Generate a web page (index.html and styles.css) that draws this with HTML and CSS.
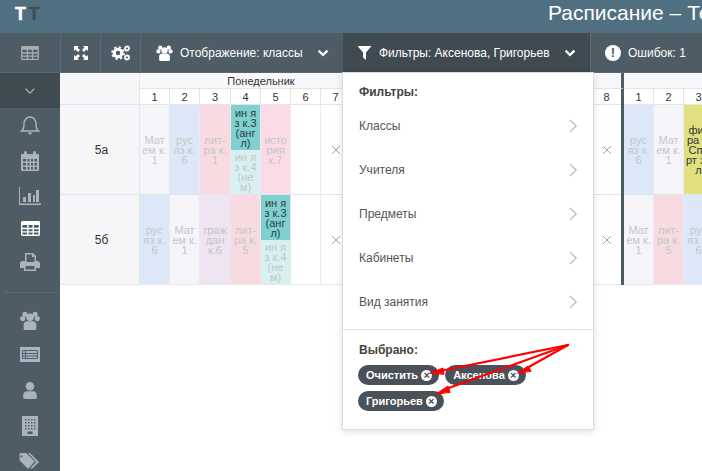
FILE: index.html
```html
<!DOCTYPE html>
<html lang="ru">
<head>
<meta charset="utf-8">
<title>Расписание</title>
<link rel="stylesheet" href="styles.css">
</head>
<body>
<svg class="defs" width="0" height="0">
  <defs>
    <symbol id="i-table" viewBox="0 0 28 22"><path fill="currentColor" fill-rule="evenodd" d="M2 0h24a2 2 0 0 1 2 2v18a2 2 0 0 1-2 2H2a2 2 0 0 1-2-2V2a2 2 0 0 1 2-2zM2 6v4h7V6zm9 0v4h6V6zm8 0v4h7V6zM2 12v3h7v-3zm9 0v3h6v-3zm8 0v3h7v-3zM2 17v3h7v-3zm9 0v3h6v-3zm8 0v3h7v-3z"/></symbol>
    <symbol id="i-group" viewBox="0 0 32 30"><g fill="currentColor"><circle cx="8" cy="5" r="4"/><circle cx="24" cy="5" r="4"/><circle cx="4.500" cy="12" r="4"/><circle cx="27.500" cy="12" r="4"/><circle cx="16" cy="10" r="6"/><path d="M6 28v-7c0-3 3-5 5-5h10c2 0 5 2 5 5v7a2 2 0 0 1-2 2H8a2 2 0 0 1-2-2z"/></g></symbol>
    <symbol id="i-chev" viewBox="0 0 14 10"><path fill="none" stroke="currentColor" stroke-width="2.800" d="M1.500 2l5.500 5.500L12.500 2"/></symbol>
    <symbol id="i-x" viewBox="0 0 10 10"><path fill="none" stroke="currentColor" stroke-width="0.900" d="M1 1l8 8M9 1l-8 8"/></symbol>
    <symbol id="i-arrow" viewBox="0 0 8 14"><path fill="none" stroke="currentColor" stroke-width="1.600" d="M1 1l6 6-6 6"/></symbol>
  </defs>
</svg>

<header class="topbar">
  <div class="logo"><span class="logo-a">T</span><span class="logo-b">T</span></div>
  <h1 class="title">Расписание – Текущее</h1>
</header>

<div class="main">
  <nav class="sidebar">
    <div class="side-top"><svg class="ic-table"><use href="#i-table"/></svg></div>
    <div class="side-toggle"><svg class="ic-toggle" viewBox="0 0 14 8"><path fill="none" stroke="currentColor" stroke-width="1.600" d="M2 1.500l5 5 5-5"/></svg></div>
    <div class="side-group">
      <svg class="side-ic" viewBox="0 0 20 20"><path fill="none" stroke="currentColor" stroke-width="1.500" d="M1.500 16c2.500-2 2.500-4 2.500-7 0-4 2.500-7 6-7s6 3 6 7c0 3 0 5 2.500 7z"/><path fill="currentColor" d="M8 17.500h4a2 2 0 0 1-4 0z"/></svg>
      <svg class="side-ic" viewBox="0 0 20 20"><path fill="currentColor" fill-rule="evenodd" d="M2 3h2V1.500a1.500 1.500 0 0 1 3 0V3h6V1.500a1.500 1.500 0 0 1 3 0V3h2a1 1 0 0 1 1 1v15a1 1 0 0 1-1 1H2a1 1 0 0 1-1-1V4a1 1 0 0 1 1-1zM3 8v2.500h3V8zm4.500 0v2.500h2V8zm3.500 0v2.500h2V8zm3.500 0v2.500h2.500V8zM3 12v2.500h3V12zm4.500 0v2.500h2V12zm3.500 0v2.500h2V12zm3.500 0v2.500h2.500V12zM3 16v2.500h3V16zm4.500 0v2.500h2V16zm3.500 0v2.500h2V16zm3.500 0v2.500h2.500V16z"/></svg>
      <svg class="side-ic side-ic-wide" viewBox="0 0 22 18"><path fill="currentColor" d="M0 0h1v16.500h21V18H0zM4 10h3v5H4zm5-4h3v9H9zm5 2h2v7h-2zm3-5h3v12h-3z"/></svg>
      <svg class="side-ic side-active" viewBox="0 0 28 22"><use href="#i-table"/></svg>
      <svg class="side-ic" viewBox="0 0 20 18"><path fill="currentColor" fill-rule="evenodd" d="M5 0h8l3 3v5h1a3 3 0 0 1 3 3v4h-4v3H4v-3H0v-4a3 3 0 0 1 3-3h2zm1.500 1.500V9h8V4H12V1.500zM5.500 13v3.500h9V13z"/></svg>
    </div>
    <div class="side-group side-group-b">
      <svg class="side-ic side-ic-group"><use href="#i-group"/></svg>
      <svg class="side-ic side-ic-list" viewBox="0 0 20 15"><path fill="currentColor" d="M0 0h20v15H0z"/><path fill="none" stroke="#4b6079" stroke-width="1" d="M2.500 3.500h15v8h-15zM2.500 6.500h15M2.500 9h15M5.500 3.500v8"/></svg>
      <svg class="side-ic side-ic-user" viewBox="0 0 16 20"><circle cx="8" cy="5" r="5" fill="currentColor"/><path fill="currentColor" d="M1.500 20a1.500 1.500 0 0 1-1.500-1.500V16c0-3 2-5 4-5h8c2 0 4 2 4 5v2.500a1.500 1.500 0 0 1-1.500 1.500z"/></svg>
      <svg class="side-ic side-ic-bld" viewBox="0 0 16 20"><path fill="currentColor" fill-rule="evenodd" d="M0 0h16v20H0zM3 3v1.500h1.500V3zm3 0v1.500h1.500V3zm3 0v1.500h1.500V3zm3 0v1.500h1.500V3zM3 6v1.500h1.500V6zm3 0v1.500h1.500V6zm3 0v1.500h1.500V6zm3 0v1.500h1.500V6zM3 9v1.500h1.500V9zm3 0v1.500h1.500V9zm3 0v1.500h1.500V9zm3 0v1.500h1.500V9zM3 12v1.500h1.500V12zm3 0v1.500h1.500V12zm3 0v1.500h1.500V12zm3 0v1.500h1.500V12zM5.500 15.500V18h5v-2.500z"/></svg>
      <svg class="side-ic side-ic-tags" viewBox="0 0 22 18"><path fill="currentColor" fill-rule="evenodd" d="M0 1a1 1 0 0 1 1-1h6l9 9-7 8-9-9zm3 2.500a1 1 0 1 0 0 .1zM9 0h2l9.500 9.500L13 17l-1.500-1 6-6.500z"/></svg>
    </div>
  </nav>

  <div class="content">
    <div class="toolbar">
      <button class="tool tool-icon" type="button"><svg class="t-ic" viewBox="0 0 14 14"><path fill="currentColor" d="M0 0h5L3.500 1.500 6 4 4 6 1.500 3.500 0 5zM14 0v5l-1.500-1.500L10 6 8 4l2.500-2.500L9 0zM0 14V9l1.500 1.500L4 8l2 2-2.500 2.500L5 14zM14 14H9l1.500-1.500L8 10l2-2 2.500 2.500L14 9z"/></svg></button>
      <button class="tool tool-icon" type="button"><svg class="t-ic t-ic-gears" viewBox="0 0 20 16"><g fill="none" stroke="currentColor"><circle cx="7" cy="8" r="3.800" stroke-width="3"/><circle cx="7" cy="8" r="6" stroke-width="1.600" stroke-dasharray="2.400 2.300"/><circle cx="16" cy="3.500" r="2" stroke-width="1.800"/><circle cx="16" cy="12.500" r="2" stroke-width="1.800"/></g></svg></button>
      <button class="tool tool-view" type="button">
        <svg class="t-group"><use href="#i-group"/></svg>
        <span class="t-label">Отображение: классы</span>
        <svg class="t-chev"><use href="#i-chev"/></svg>
      </button>
      <button class="tool tool-filter" type="button">
        <svg class="t-funnel" viewBox="0 0 14 14"><path fill="currentColor" d="M0 0h14L8.500 6.500V14l-3-2.500v-5z"/></svg>
        <span class="t-label">Фильтры: Аксенова, Григорьев</span>
        <svg class="t-chev"><use href="#i-chev"/></svg>
      </button>
      <button class="tool tool-err" type="button">
        <span class="err-dot">!</span>
        <span class="t-label">Ошибок: 1</span>
      </button>
    </div>

    <div class="grid">
      <div class="row row-days">
        <div class="c-name"></div>
        <div class="c-day">Понедельник</div>
        <div class="c-day"></div>
        <div class="c-day c-day-last"></div>
      </div>
      <div class="row row-nums">
        <div class="c-name"></div>
        <div class="day">
          <div class="n">1</div><div class="n">2</div><div class="n">3</div><div class="n">4</div><div class="n">5</div><div class="n">6</div><div class="n">7</div><div class="n">8</div>
        </div>
        <div class="day">
          <div class="n">1</div><div class="n">2</div><div class="n">3</div><div class="n">4</div><div class="n">5</div><div class="n">6</div><div class="n">7</div><div class="n">8</div>
        </div>
        <div class="day day-last">
          <div class="n">1</div><div class="n">2</div><div class="n">3</div>
        </div>
      </div>

      <div class="row row-class">
        <div class="c-name">5а</div>
        <div class="day">
          <div class="l gray">Мат<br>ем к.<br>1</div>
          <div class="l blue">рус<br>яз к.<br>6</div>
          <div class="l pink">лит-<br>ра к.<br>1</div>
          <div class="l split"><div class="hi">ин я<br>з к.3<br>(анг<br>л)</div><div class="lo">ин я<br>з к.4<br>(не<br>м)</div></div>
          <div class="l rose">исто<br>рия<br>к.7</div>
          <div class="l"></div>
          <div class="l x"><svg class="x-ic"><use href="#i-x"/></svg></div>
          <div class="l"></div>
        </div>
        <div class="day">
          <div class="l"></div><div class="l"></div><div class="l"></div><div class="l"></div><div class="l"></div><div class="l"></div><div class="l"></div>
          <div class="l x"><svg class="x-ic"><use href="#i-x"/></svg></div>
        </div>
        <div class="day day-last">
          <div class="l blue">рус<br>яз к.<br>6</div>
          <div class="l gray">Мат<br>ем к.<br>1</div>
          <div class="l yellow">физ<br>ра к.<br>Спо<br>рт за<br>л</div>
        </div>
      </div>

      <div class="row row-class">
        <div class="c-name">5б</div>
        <div class="day">
          <div class="l blue">рус<br>яз к.<br>6</div>
          <div class="l gray">Мат<br>ем к.<br>1</div>
          <div class="l lilac">граж<br>дан<br>к.6</div>
          <div class="l pink">лит-<br>ра к.<br>5</div>
          <div class="l split"><div class="hi">ин я<br>з к.3<br>(анг<br>л)</div><div class="lo">ин я<br>з к.4<br>(не<br>м)</div></div>
          <div class="l"></div>
          <div class="l x"><svg class="x-ic"><use href="#i-x"/></svg></div>
          <div class="l"></div>
        </div>
        <div class="day">
          <div class="l"></div><div class="l"></div><div class="l"></div><div class="l"></div><div class="l"></div><div class="l"></div><div class="l"></div>
          <div class="l x"><svg class="x-ic"><use href="#i-x"/></svg></div>
        </div>
        <div class="day day-last">
          <div class="l gray">Мат<br>ем к.<br>1</div>
          <div class="l pink">лит-<br>ра к.<br>5</div>
          <div class="l blue">рус<br>яз к.<br>6</div>
        </div>
      </div>
    </div>
  </div>
</div>

<aside class="dropdown">
  <div class="dd-top">
    <div class="dd-head">Фильтры:</div>
    <ul class="dd-list">
      <li class="dd-item">Классы<svg class="dd-arrow"><use href="#i-arrow"/></svg></li>
      <li class="dd-item">Учителя<svg class="dd-arrow"><use href="#i-arrow"/></svg></li>
      <li class="dd-item">Предметы<svg class="dd-arrow"><use href="#i-arrow"/></svg></li>
      <li class="dd-item">Кабинеты<svg class="dd-arrow"><use href="#i-arrow"/></svg></li>
      <li class="dd-item">Вид занятия<svg class="dd-arrow"><use href="#i-arrow"/></svg></li>
    </ul>
  </div>
  <div class="dd-bottom">
    <div class="dd-sel">Выбрано:</div>
    <div class="chips">
      <span class="chip">Очистить<span class="chip-x">×</span></span>
      <span class="chip">Аксенова<span class="chip-x">×</span></span>
      <span class="chip">Григорьев<span class="chip-x">×</span></span>
    </div>
  </div>
</aside>

<svg class="arrows" viewBox="0 0 702 471">
  <g fill="#f00" stroke="#f00" stroke-width="2.200" stroke-linecap="round">
    <line x1="568" y1="345" x2="440" y2="371"/>
    <line x1="568" y1="345" x2="527" y2="368"/>
    <line x1="568" y1="345" x2="446" y2="389"/>
    <path stroke-width="1" d="M430 373l13-5 1 6z"/>
    <path stroke-width="1" d="M518 373l10-7 3 5z"/>
    <path stroke-width="1" d="M436 394l12-8 2 6z"/>
  </g>
</svg>
</body>
</html>
```

FILE: styles.css
```css
* { box-sizing: border-box; }
html, body { margin: 0; padding: 0; height: 100%; overflow: hidden; }
body {
  position: relative;
  width: 702px;
  height: 471px;
  font-family: "Liberation Sans", Arial, sans-serif;
  background: #fff;
  color: #333;
}
.defs { position: absolute; }

.topbar {
  height: 33px;
  background: #507082;
  display: flex;
  align-items: flex-start;
  padding-left: 15px;
  white-space: nowrap;
  overflow: hidden;
}
.logo { width: 533px; flex: none; font-weight: 700; font-size: 17.500px; line-height: 28px; letter-spacing: 3px; -webkit-text-stroke: 0.500px; }
.logo-a { color: #fff; }
.logo-b { color: #3f4d55; }
.title { margin: 0; font-weight: 400; font-size: 21px; line-height: 26px; color: #fff; flex: none; }

.main { display: flex; height: 438px; }

.sidebar { width: 60px; flex: none; background: #4d5c65; color: #aab4ba; display: flex; flex-direction: column; }
.side-top { height: 40px; border-bottom: 1px solid #4f6c80; display: flex; align-items: center; justify-content: center; }
.ic-table { width: 18px; height: 14px; color: #a8adb0; }
.side-toggle { height: 35px; background: #3f4b51; display: flex; align-items: center; justify-content: center; color: #a6aeb3; }
.ic-toggle { width: 12px; height: 8px; }
.side-group { display: flex; flex-direction: column; align-items: center; padding: 7px 0 0; height: 185px; gap: 16px; border-bottom: 1px solid #5b6a73; margin: 0 3px; }
.side-group-b { border: 0; height: auto; padding-top: 18px; gap: 17px; }
.side-ic { width: 20px; height: 20px; flex: none; }
.side-ic-wide { width: 22px; height: 18px; }
.side-active { color: #fff; width: 19px; height: 15px; }
.side-ic-group { width: 22px; height: 19px; }
.side-ic-list { width: 20px; height: 15px; margin-bottom: 3px; }
.side-ic-user { width: 14px; height: 17px; }
.side-ic-bld { width: 16px; height: 20px; }
.side-ic-tags { width: 22px; height: 17px; }

.content { flex: 1; min-width: 0; overflow: hidden; }

.toolbar { height: 40px; display: flex; background: #4d5c65; border-bottom: 1px solid #4f6c80; }
.tool { border: 0; margin: 0; background: none; color: #fff; font: inherit; font-size: 12px; display: flex; align-items: center; border-left: 1px solid #4f6c80; padding: 0; flex: none; }
.tool-icon { width: 40px; justify-content: center; }
.t-ic { width: 14px; height: 14px; }
.t-ic-gears { width: 20px; height: 16px; }
.tool-view { width: 203px; padding-left: 15px; }
.t-group { width: 17px; height: 16px; margin-right: 7px; }
.t-label { white-space: nowrap; }
.t-chev { width: 12px; height: 8px; margin-left: auto; margin-right: 14px; }
.tool-filter { width: 247px; background: #3f4b51; padding-left: 14px; border: 0; }
.t-funnel { width: 15px; height: 14px; margin-right: 7px; }
.tool-err { padding-left: 14px; }
.err-dot { width: 16px; height: 16px; border-radius: 50%; background: #fff; color: #4d5c65; font-weight: 700; font-size: 13px; line-height: 16px; text-align: center; margin-right: 7px; }

.row { display: flex; white-space: nowrap; }
.c-name { width: 80px; flex: none; background: #f6f6f9; border-right: 1px solid #e4e4ea; font-size: 12px; color: #333; display: flex; align-items: center; justify-content: center; padding: 1px 0 0 4px; }
.row-days { height: 16px; }
.c-day { width: 242px; flex: none; background: #f8f8fa; text-align: center; font-size: 11px; line-height: 16px; color: #333; border-right: 3px solid #4d5c65; border-bottom: 1px solid #e4e4ea; padding-left: 3px; }
.c-day-last { border-right: 0; }
.row-nums { height: 16px; }
.row-nums .c-name { border-bottom: 1px solid #e4e4ea; }
.day { width: 242px; flex: none; display: flex; overflow: hidden; border-right: 3px solid #4d5c65; }
.day-last { border-right: 0; }
.n { width: 30px; flex: none; background: #fff; border-right: 1px solid #e4e4ea; border-bottom: 1px solid #e4e4ea; text-align: center; font-size: 11px; line-height: 16px; color: #333; }
.c-name + .day > :nth-child(3) { width: 31px; }
.row-class { height: 90px; }
.row-class .c-name { border-bottom: 1px solid #e4e4ea; }
.l { width: 30px; flex: none; border-right: 1px solid #e9e9ef; border-bottom: 1px solid #e4e4ea; font-size: 11px; line-height: 10px; color: #c4c6c8; text-align: center; display: flex; flex-direction: column; justify-content: center; white-space: nowrap; background: #fff; }
.gray { background: #f5f5f9; }
.blue { background: #dce8f8; }
.pink { background: #f8dbe0; }
.rose { background: #fbdce6; }
.lilac { background: #efe4f2; }
.yellow { background: #e0e080; color: #333; }
.x { align-items: center; color: #9a9a9a; }
.x-ic { width: 10px; height: 10px; }
.split { justify-content: flex-start; }
.hi { height: 45px; background: #80d0d0; color: #2c3a3f; display: flex; align-items: center; justify-content: center; }
.lo { flex: 1; background: #d8f0f0; display: flex; align-items: center; justify-content: center; }

.dropdown { position: absolute; left: 342px; top: 72px; width: 252px; height: 358px; background: #fff; border: 1px solid #ddd; box-shadow: 0 2px 8px rgba(0,0,0,.12); display: flex; flex-direction: column; font-size: 12px; }
.dd-top { height: 257px; border-bottom: 1px solid #e0e0e4; padding: 12px 16px 0; }
.dd-head { font-weight: 700; color: #444; line-height: 14px; margin-bottom: 5px; }
.dd-list { list-style: none; margin: 0; padding: 0; }
.dd-item { height: 44px; display: flex; align-items: center; justify-content: space-between; color: #555; }
.dd-arrow { width: 8px; height: 14px; color: #c5c8ca; }
.dd-bottom { padding: 13px 16px 0 15px; }
.dd-sel { font-weight: 700; color: #444; line-height: 14px; margin-bottom: 8px; padding-left: 1px; }
.chips { display: flex; flex-wrap: wrap; gap: 6px; }
.chip { height: 20px; border-radius: 10px; background: #4b5158; color: #fff; font-size: 11px; font-weight: 700; display: inline-flex; align-items: center; padding: 0 7px 0 8px; }
.chip-x { width: 11px; height: 11px; border-radius: 50%; background: #fff; color: #4b5158; font-size: 11px; line-height: 11px; text-align: center; margin-left: 3px; }

.arrows { position: absolute; left: 0; top: 0; width: 702px; height: 471px; pointer-events: none; }
```
